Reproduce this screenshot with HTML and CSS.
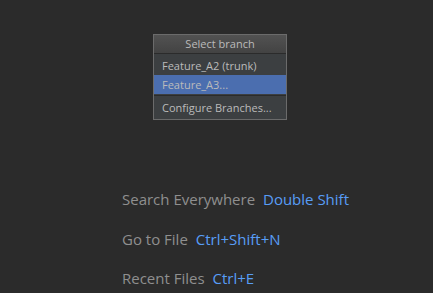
FILE: index.html
```html
<!DOCTYPE html>
<html lang="en">
<head>
    <meta charset="UTF-8">
    <title>Select branch</title>
    <link rel="stylesheet" href="styles.css">
</head>
<body>
    <div class="popup">
        <div class="popup-title">Select branch</div>
        <div class="popup-list">
            <div class="item">Feature_A2 (trunk)</div>
            <div class="item selected">Feature_A3...</div>
        </div>
        <div class="popup-list">
            <div class="item">Configure Branches...</div>
        </div>
    </div>

    <div class="hints">
        <div class="hint">Search Everywhere <span class="key">Double Shift</span></div>
        <div class="hint">Go to File <span class="key">Ctrl+Shift+N</span></div>
        <div class="hint">Recent Files <span class="key">Ctrl+E</span></div>
    </div>
</body>
</html>
```

FILE: styles.css
```css
body {
    margin: 0;
    height: 293px;
    background-color: #2b2b2b;
    font-family: "Open Sans", "Noto Sans", sans-serif;
    overflow: hidden;
}

.popup {
    width: 132px;
    margin: 34px 0 0 153px;
    border: 1px solid #6b6b6b;
    background-color: #3c3f41;
    font-size: 11px;
    color: #bbbbbb;
}

.popup-title {
    height: 18px;
    line-height: 18px;
    text-align: center;
    background: linear-gradient(#525252, #434343);
    border-bottom: 1px solid #2b2b2b;
}

.popup-list {
    padding: 2px 0 1px;
}

.popup-list + .popup-list {
    border-top: 1px solid #2b2b2b;
    padding: 2px 0;
}

.item {
    height: 19px;
    line-height: 19px;
    padding-left: 8px;
    white-space: nowrap;
}

.selected {
    background-color: #4b6eaf;
}

.hints {
    margin: 69px 0 0 122px;
    display: flex;
    flex-direction: column;
    gap: 19.5px;
}

.hint {
    font-size: 15px;
    line-height: 20px;
    color: #8f8f8f;
    white-space: nowrap;
}

.key {
    color: #589df6;
    margin-left: 4px;
}
```
